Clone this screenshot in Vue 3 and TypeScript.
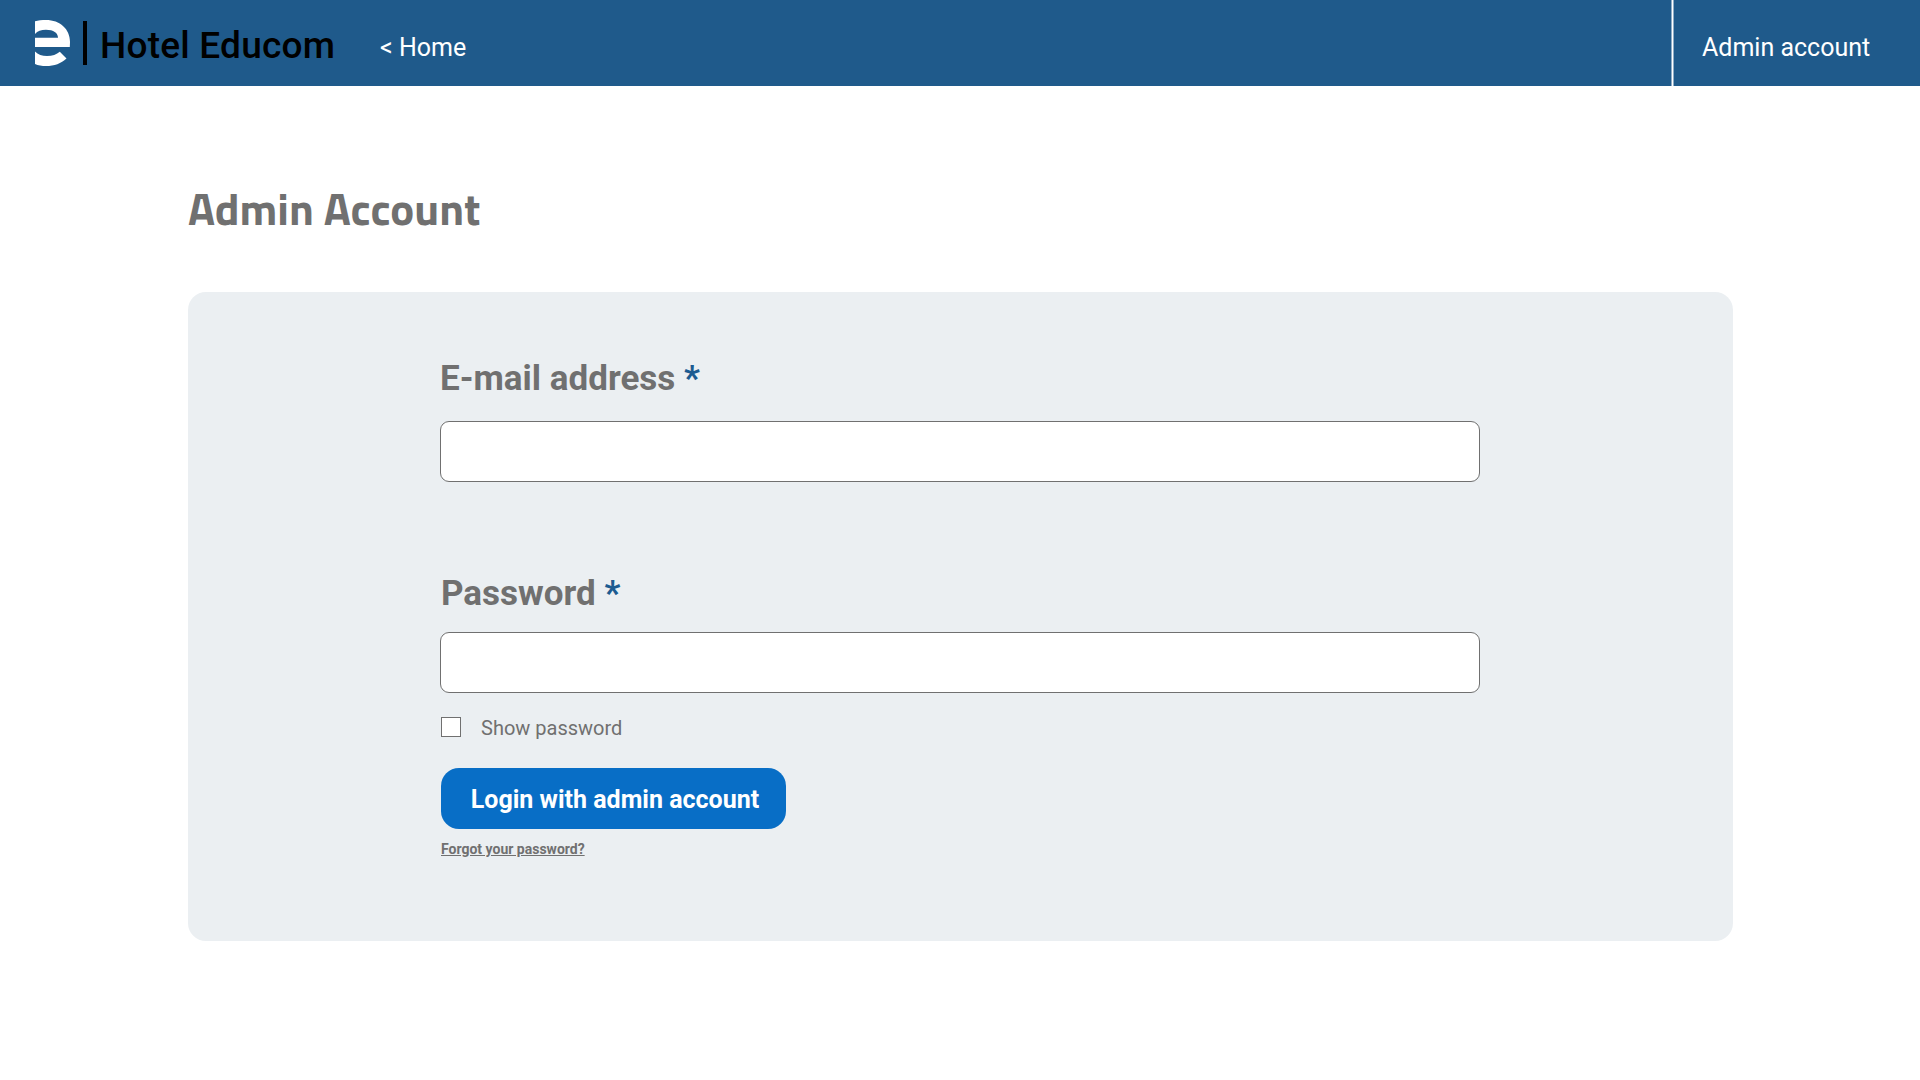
<script setup lang="ts">
import { ref } from 'vue'

const email = ref('')
const password = ref('')
const showPassword = ref(false)
</script>

<template>
  <div class="page">
    <header class="topbar">
      <div class="brand">
        <svg class="logo" width="35" height="46" viewBox="0 0 35 46" aria-hidden="true">
          <path
            fill="#fff"
            fill-rule="evenodd"
            d="M0 1.2C3 .3 7 0 11 0C25 0 35 9 35 22L34.8 27H0V17.8H23C23 13 18.500 9.800 11 9.800C6 9.800 2.500 11.200 0 14Z"
          />
          <path fill="#fff" d="M0 31.500C3 34.500 7 36 12 36C17.500 36 21.500 34.500 24.800 31.700L31.500 38.500C26 43.500 19.500 46 11 46C7 46 3 45.500 0 44Z" />
        </svg>
        <span class="bar"></span>
        <span class="name">Hotel Educom</span>
      </div>
      <a class="home">&lt; Home</a>
      <a class="account">Admin account</a>
    </header>

    <main class="content">
      <h1 class="title">Admin Account</h1>
      <form class="panel" @submit.prevent>
        <label class="label" for="email">E-mail address <span class="star">*</span></label>
        <input id="email" v-model="email" class="field" type="text" />
        <label class="label second" for="password">Password <span class="star">*</span></label>
        <input id="password" v-model="password" class="field" :type="showPassword ? 'text' : 'password'" />
        <label class="show">
          <input v-model="showPassword" class="check" type="checkbox" />
          <span class="show-text">Show password</span>
        </label>
        <button class="login" type="submit">Login with admin account</button>
        <a class="forgot">Forgot your password?</a>
      </form>
    </main>
  </div>
</template>

<style>
body {
  background: #fff;
}
</style>

<style scoped>
.page {
  height: 1080px;
  overflow: hidden;
  font-family: Roboto, sans-serif;
  color: #707070;
}
.topbar {
  display: flex;
  height: 86px;
  background: #1f5a8b;
  color: #fff;
  white-space: nowrap;
}
.brand {
  display: flex;
  width: 345px;
  padding-left: 35px;
}
.logo {
  margin-top: 20px;
}
.bar {
  width: 4px;
  height: 44px;
  margin: 21px 0 0 13px;
  background: #000;
}
.name {
  margin: 24px 0 0 13px;
  font-size: 37px;
  font-weight: 500;
  line-height: 44px;
  letter-spacing: 0.22px;
  color: #000;
}
.home,
.account {
  font-size: 25px;
  line-height: 30px;
  padding-top: 33px;
}
.account {
  box-sizing: border-box;
  width: 249px;
  margin-left: auto;
  padding-left: 31px;
  background: linear-gradient(to right, #8facc5 1px, #fff 1px 2px, #8facc5 2px 3px, transparent 3px);
}
.content {
  width: 1545px;
  margin-left: 188px;
}
.title {
  margin: 92px 0 54px;
  font-family: "Titillium Web", Roboto, sans-serif;
  font-size: 45px;
  font-weight: 700;
  line-height: 60px;
}
.panel {
  display: flex;
  flex-direction: column;
  align-items: flex-start;
  box-sizing: border-box;
  height: 649px;
  padding: 65px 253px 0 252px;
  border-radius: 18px;
  background: #ebeff2;
}
.label {
  height: 64px;
  font-size: 35px;
  font-weight: 700;
  line-height: 44px;
}
.second {
  height: 60px;
  margin: 90px 0 0 1px;
}
.star {
  color: #1c5b91;
}
.field {
  box-sizing: border-box;
  width: 1040px;
  height: 61px;
  margin: 0;
  padding: 0 16px;
  border: 1px solid #707070;
  border-radius: 9px;
  background: #fff;
  font: 24px Roboto, sans-serif;
  outline: none;
}
.show {
  display: flex;
  height: 51px;
  margin: 24px 0 0 1px;
}
.check {
  appearance: none;
  box-sizing: border-box;
  width: 20px;
  height: 20px;
  margin: 0;
  border: 1px solid #707070;
  background: #fff;
}
.show-text {
  margin-left: 20px;
  font-size: 20px;
  line-height: 23px;
}
.login {
  width: 345px;
  height: 61px;
  margin: 0 0 0 1px;
  padding: 2px 0 0 3px;
  border: 0;
  border-radius: 18px;
  background: #086ec6;
  color: #fff;
  font: 700 25px/30px Roboto, sans-serif;
}
.forgot {
  margin: 12px 0 0 1px;
  font-size: 14px;
  font-weight: 700;
  line-height: 17px;
  text-decoration: underline;
}
</style>
